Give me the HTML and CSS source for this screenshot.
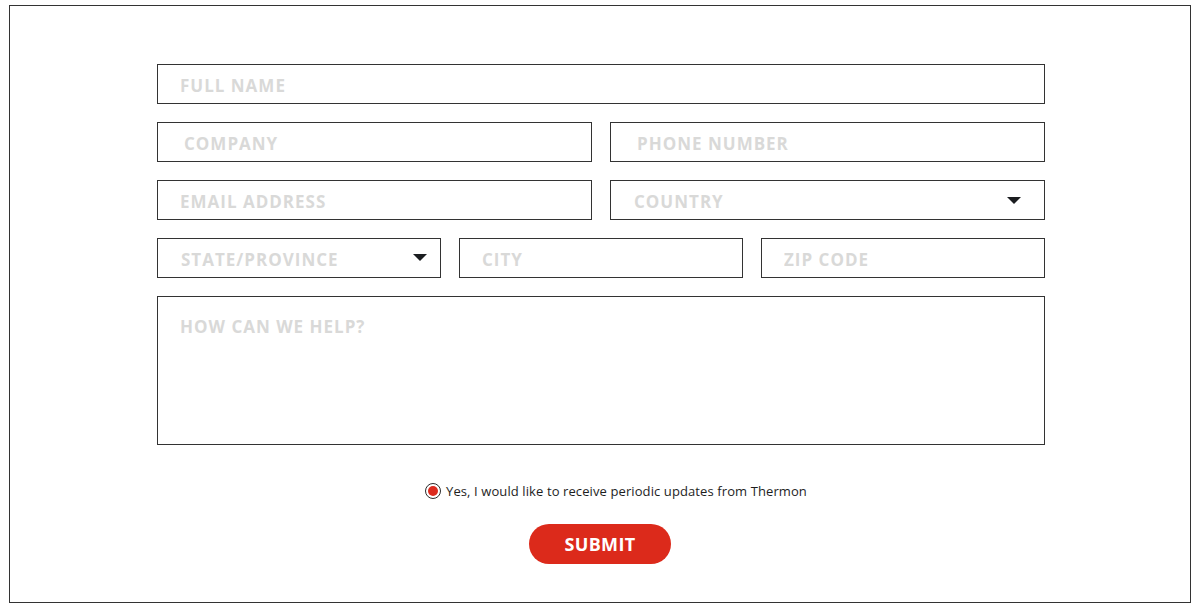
FILE: index.html
```html
<!DOCTYPE html>
<html lang="en">
<head>
<meta charset="utf-8">
<title>Contact form</title>
<link rel="stylesheet" href="styles.css">
</head>
<body>
<div class="frame">
  <form class="form">
    <div class="row">
      <input class="field" type="text" placeholder="FULL NAME">
    </div>
    <div class="row cols-2">
      <input class="field pad-wide" type="text" placeholder="COMPANY">
      <input class="field pad-wide" type="text" placeholder="PHONE NUMBER">
    </div>
    <div class="row cols-2">
      <input class="field" type="text" placeholder="EMAIL ADDRESS">
      <div class="select-wrap">
        <select class="field select"><option>COUNTRY</option></select>
        <svg class="caret" width="14" height="7" viewBox="0 0 14 7"><path d="M0 0H14L7 7Z" fill="#1b1d20"/></svg>
      </div>
    </div>
    <div class="row cols-3">
      <div class="select-wrap">
        <select class="field select"><option>STATE/PROVINCE</option></select>
        <svg class="caret caret-near" width="14" height="7" viewBox="0 0 14 7"><path d="M0 0H14L7 7Z" fill="#1b1d20"/></svg>
      </div>
      <input class="field" type="text" placeholder="CITY">
      <input class="field" type="text" placeholder="ZIP CODE">
    </div>
    <div class="row">
      <textarea class="field area" placeholder="HOW CAN WE HELP?"></textarea>
    </div>
    <label class="optin">
      <span class="radio"><span class="dot"></span></span>
      <span class="optin-text">Yes, I would like to receive periodic updates from Thermon</span>
    </label>
    <div class="actions">
      <button class="submit" type="button">SUBMIT</button>
    </div>
  </form>
</div>
</body>
</html>
```

FILE: styles.css
```css
* { box-sizing: border-box; }
html, body { margin: 0; padding: 0; background: #fff; }
body { font-family: "Open Sans", "Liberation Sans", sans-serif; }

.frame {
  margin: 5px 0 0 9px;
  width: 1182px;
  height: 598px;
  border: 1px solid #333;
  padding-top: 58px;
}

.form {
  width: 888px;
  margin-left: 147px;
  display: flex;
  flex-direction: column;
  gap: 18px;
}

.row { display: grid; grid-template-columns: 1fr; gap: 18px; }
.cols-2 { grid-template-columns: 1fr 1fr; }
.cols-3 { grid-template-columns: 1fr 1fr 1fr; }

.field {
  display: block;
  width: 100%;
  height: 40px;
  border: 1px solid #333;
  border-radius: 0;
  background: #fff;
  padding: 2px 22px 0;
  margin: 0;
  font-family: "Open Sans", "Liberation Sans", sans-serif;
  font-weight: 700;
  font-size: 17px;
  letter-spacing: 1px;
  color: #d9d9d8;
  outline: none;
}
.field::placeholder { color: #d9d9d8; opacity: 1; }
.pad-wide { padding-left: 26px; }

.select-wrap { position: relative; }
.select {
  appearance: none;
  -webkit-appearance: none;
  padding-left: 23px;
}
.caret { position: absolute; right: 24px; top: 17px; pointer-events: none; }
.caret-near { right: 14px; top: 16px; }

.area {
  height: 149px;
  resize: none;
  padding-top: 19px;
  line-height: 22px;
}

.optin {
  margin-top: 20px;
  display: flex;
  justify-content: center;
  align-items: center;
  gap: 5px;
  padding-left: 30px;
  height: 16px;
}
.radio {
  width: 16px;
  height: 16px;
  border-radius: 50%;
  border: 1.5px solid #2b2b2b;
  display: flex;
  align-items: center;
  justify-content: center;
}
.dot { width: 10px; height: 10px; border-radius: 50%; background: #dc2a1e; }
.optin-text {
  font-family: "Open Sans", "Liberation Sans", sans-serif;
  font-size: 13px;
  letter-spacing: 0.1px;
  color: #1e1e1e;
}

.actions { display: flex; justify-content: center; margin-top: 7px; padding-right: 2px; }
.submit {
  width: 142px;
  height: 40px;
  border: 0;
  border-radius: 20px;
  background: #dc2a1b;
  color: #fff;
  font-family: "Open Sans", "Liberation Sans", sans-serif;
  font-weight: 700;
  font-size: 18px;
  letter-spacing: 0.3px;
  padding: 0;
}
```
